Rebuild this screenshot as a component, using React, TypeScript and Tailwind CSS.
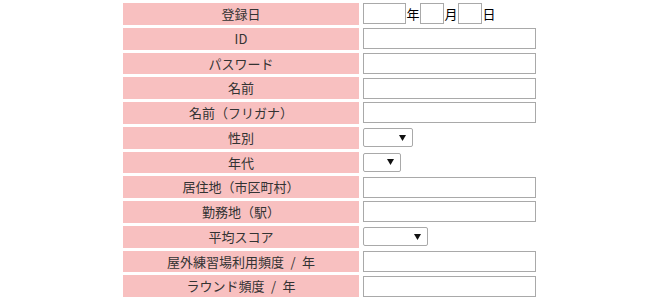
import React from 'react';

type Field =
  | { label: string; kind: 'date' }
  | { label: string; kind: 'text' }
  | { label: string; kind: 'select'; width: string };

const fields: Field[] = [
  { label: '登録日', kind: 'date' },
  { label: 'ID', kind: 'text' },
  { label: 'パスワード', kind: 'text' },
  { label: '名前', kind: 'text' },
  { label: '名前（フリガナ）', kind: 'text' },
  { label: '性別', kind: 'select', width: 'w-[50px]' },
  { label: '年代', kind: 'select', width: 'w-[38px]' },
  { label: '居住地（市区町村）', kind: 'text' },
  { label: '勤務地（駅）', kind: 'text' },
  { label: '平均スコア', kind: 'select', width: 'w-[65px]' },
  { label: '屋外練習場利用頻度\u2002/\u2002年', kind: 'text' },
  { label: 'ラウンド頻度\u2002/\u2002年', kind: 'text' },
];

const Select = ({ width }: { width: string }) => (
  <div className={`${width} h-[19px] bg-white border border-[#a9a9a9] rounded-[2px] flex items-center justify-end pr-[6px]`}>
    <svg width="7" height="6" viewBox="0 0 7 6">
      <path d="M0 0 L7 0 L3.5 6 Z" fill="#111" />
    </svg>
  </div>
);

const Input = ({ width }: { width: string }) => (
  <div className={`${width} h-[21px] bg-white border border-[#a9a9a9]`} />
);

const FieldInput = ({ f }: { f: Field }) => {
  if (f.kind === 'date') {
    return (
      <div className="flex items-center text-[13px] text-black">
        <Input width="w-[43px]" />
        <span className="w-[14px] text-center">年</span>
        <Input width="w-[24px]" />
        <span className="w-[14px] text-center">月</span>
        <Input width="w-[24px]" />
        <span className="w-[14px] text-center">日</span>
      </div>
    );
  }
  if (f.kind === 'select') return <Select width={f.width} />;
  return <Input width="w-[173px]" />;
};

const App = () => {
  return (
    <div
      className="w-[670px] h-[300px] bg-white overflow-hidden"
      style={{ fontFamily: '"Noto Sans CJK JP", "Noto Sans", sans-serif' }}
    >
      <div className="w-[428px] mx-auto pt-[3px] px-[2px] grid grid-cols-[236px_186px] gap-x-[2px] gap-y-[3px]">
        {fields.map((f) => (
          <React.Fragment key={f.label}>
            <div className="h-[21.75px] bg-[#f8c0c0] flex items-center justify-center text-[13px] text-[#333]">
              {f.label}
            </div>
            <div className="h-[21.75px] flex items-center pl-[2px]">
              <FieldInput f={f} />
            </div>
          </React.Fragment>
        ))}
      </div>
    </div>
  );
};

export default App;
